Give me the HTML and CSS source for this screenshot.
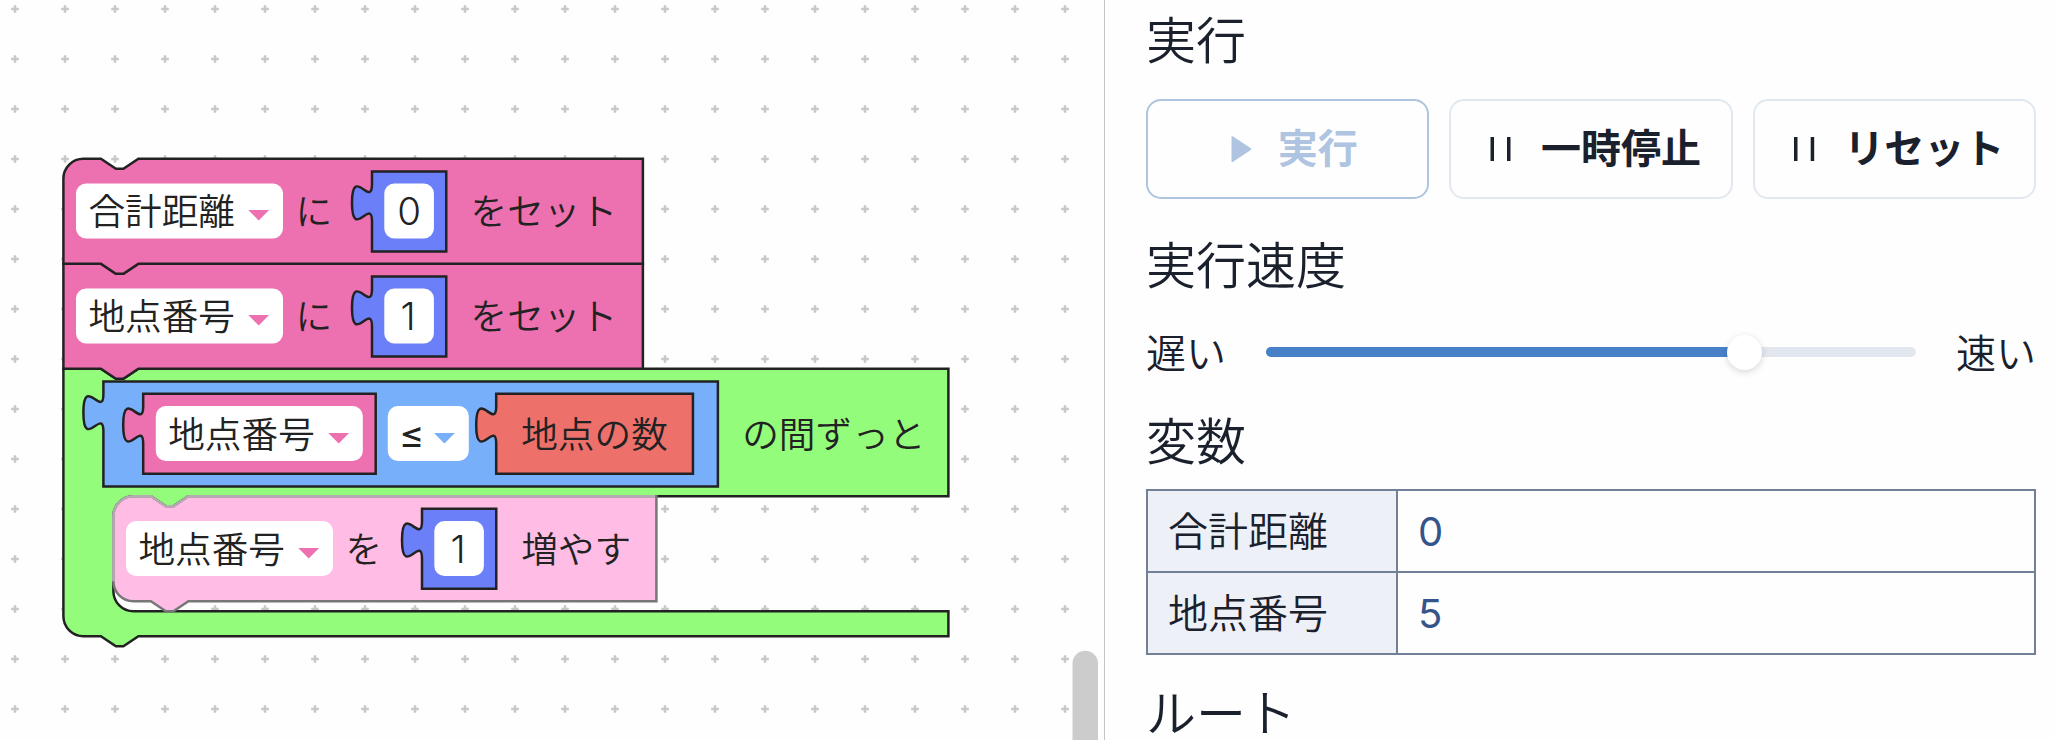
FILE: index.html
```html
<!DOCTYPE html>
<html lang="ja">
<head>
<meta charset="utf-8">
<title>実行</title>
<link rel="stylesheet" href="styles.css">
</head>
<body>
<main class="app">
  <section class="workspace">
    <svg class="canvas" width="1104" height="740" viewBox="0 0 1104 740">
      <defs>
        <pattern id="grid" x="-10" y="-16" width="50" height="50" patternUnits="userSpaceOnUse">
          <path class="grid-mark" d="M21.2 25h7.6M25 21.2v7.6"/>
        </pattern>
        <path id="arrow" d="M0 0h20.8L10.4 10.4z"/>
        <path id="number" d="M0 0h29.7v32H0V20c0-10-8 8-8-7.5s8 2.5 8-7.5z"/>
      </defs>
      <rect width="1104" height="740" fill="url(#grid)"/>

      <g class="outlined" transform="translate(63.4 158.75) scale(2.5)">
        <path class="green" d="M0 84h15l6 4h3l6-4h324v51H50l-6 4h-3l-6-4h-7a8 8 0 0 0-8 8v30a8 8 0 0 0 8 8h326v10H30l-6 4h-3l-6-4H8a8 8 0 0 1-8-8z"/>
        <path class="pink" d="M0 42h15l6 4h3l6-4h201.8v42H30l-6 4h-3l-6-4H0z"/>
        <path class="pink" d="M0 8a8 8 0 0 1 8-8h7l6 4h3l6-4h201.8v42H30l-6 4h-3l-6-4H0z"/>
      </g>

      <g class="outlined">
        <use href="#number" class="indigo" transform="translate(372 171.6) scale(2.5)"/>
        <use href="#number" class="indigo" transform="translate(372 276.6) scale(2.5)"/>
        <path class="blue" transform="translate(103.4 381.4) scale(2.5)" d="M0 0h245.8v42H0V20c0-10-8 8-8-7.5s8 2.5 8-7.5z"/>
        <path class="pink" transform="translate(143.2 393.8) scale(2.5)" d="M0 0h93v32H0V20c0-10-8 8-8-7.5s8 2.5 8-7.5z"/>
        <path class="red" transform="translate(496.2 393.8) scale(2.5)" d="M0 0h78.7v32H0V20c0-10-8 8-8-7.5s8 2.5 8-7.5z"/>
        <g transform="translate(113.4 496.25) scale(2.5)">
          <path class="running" d="M0 8a8 8 0 0 1 8-8h7l6 4h3l6-4h187.2v42H30l-6 4h-3l-6-4H8a8 8 0 0 1-8-8z"/>
          <path class="running-light" d="M0 34V8a8 8 0 0 1 8-8h7l6 4h3l6-4h186.7"/>
        </g>
        <use href="#number" class="indigo" transform="translate(422 508.8) scale(2.5)"/>
      </g>

      <g class="field">
        <rect x="76" y="183.5" width="207" height="55" rx="10"/>
        <rect x="384.3" y="183.5" width="49.6" height="55" rx="10"/>
        <rect x="76" y="288.5" width="207" height="55" rx="10"/>
        <rect x="384.3" y="288.5" width="49.6" height="55" rx="10"/>
        <rect x="155.8" y="406" width="207" height="55" rx="10"/>
        <rect x="387.8" y="406" width="81" height="55" rx="10"/>
        <rect x="126" y="521" width="207" height="55" rx="10"/>
        <rect x="434.3" y="521" width="49.6" height="55" rx="10"/>
      </g>
      <use href="#arrow" class="pink" x="248.3" y="210"/>
      <use href="#arrow" class="pink" x="248.3" y="315"/>
      <use href="#arrow" class="pink" x="328.3" y="433"/>
      <use href="#arrow" class="blue" x="434" y="433"/>
      <use href="#arrow" class="pink" x="298.3" y="548"/>

      <g class="label">
        <text x="88.4" y="225">合計距離</text>
        <text x="295.6" y="225">に</text>
        <text x="470.5" y="225">をセット</text>
        <text x="88.4" y="330">地点番号</text>
        <text x="295.6" y="330">に</text>
        <text x="470.5" y="330">をセット</text>
        <text x="168.2" y="447.5">地点番号</text>
        <text x="521.2" y="447.5">地点の数</text>
        <text x="742.2" y="447.5">の間ずっと</text>
        <text x="138.4" y="562.5">地点番号</text>
        <text x="345.6" y="562.5">を</text>
        <text x="521.2" y="562.5">増やす</text>
      </g>
      <g class="digit">
        <text x="409.2" y="225">0</text>
        <text x="408" y="330">1</text>
        <text x="458" y="562.5">1</text>
        <text class="operator" x="411.5" y="448">≤</text>
      </g>
      <rect class="scrollbar" x="1072.5" y="650.8" width="25.5" height="200" rx="12.75"/>
    </svg>
  </section>

  <aside class="panel">
    <h2 class="heading">実行</h2>
    <div class="buttons">
      <button class="button button-disabled" disabled>
        <svg class="icon" viewBox="0 0 40 40"><path d="M13.5 8.2a1 1 0 0 1 1.6-.8l17.7 11.9a1 1 0 0 1 0 1.6L15.1 32.8a1 1 0 0 1-1.6-.8z"/></svg>実行
      </button>
      <button class="button">
        <svg class="icon" viewBox="0 0 40 40"><path d="M9.5 8H13v24H9.5zM26 8h3.5v24H26z"/></svg>一時停止
      </button>
      <button class="button">
        <svg class="icon" viewBox="0 0 40 40"><path d="M10 8h3.5v24H10zM26.7 8h3.5v24h-3.5z"/></svg>リセット
      </button>
    </div>
    <h2 class="heading heading-speed">実行速度</h2>
    <div class="speed">
      <span class="speed-label">遅い</span>
      <div class="track"><div class="fill" style="width: 73.7%"><div class="thumb"></div></div></div>
      <span class="speed-label">速い</span>
    </div>
    <h2 class="heading heading-variables">変数</h2>
    <table class="variables">
      <tr><th>合計距離</th><td>0</td></tr>
      <tr><th>地点番号</th><td>5</td></tr>
    </table>
    <h2 class="heading heading-route">ルート</h2>
  </aside>
</main>
</body>
</html>
```

FILE: styles.css
```css
* { box-sizing: border-box; }

body {
  margin: 0;
  background: #fefefe;
  color: #1a202c;
  font-family: Inter, "Noto Sans CJK JP", sans-serif;
  font-weight: 350;
}

.app {
  display: flex;
  height: 740px;
  overflow: hidden;
}

.workspace {
  flex: 0 0 1104px;
  overflow: hidden;
}

.canvas { display: block; }
.grid-mark { stroke: #c8c8c8; stroke-width: 2.5; }
.outlined { stroke: #222; stroke-width: 1; }
.pink { fill: #ed70b0; }
.green { fill: #94fc7b; }
.blue { fill: #78affa; }
.indigo { fill: #6b7ff8; }
.red { fill: #ed706b; }
.running { fill: #ffbde5; stroke: #777; }
.running-light { fill: none; stroke: #b5adb2; }
.field { fill: #fff; }

.label,
.digit {
  fill: #222;
  font-size: 36.67px;
}

.label { font-family: "Noto Sans CJK JP", sans-serif; }
.digit { font-size: 38.5px; text-anchor: middle; }
.operator { font-size: 38px; font-weight: 400; }
.scrollbar { fill: #ccc; }

.panel {
  flex: 1;
  border-left: 1px solid #c4c4c4;
  padding: 11px 18px 0 41px;
}

.heading {
  margin: 0;
  padding-top: 1px;
  font-size: 50px;
  font-weight: 350;
  line-height: 59px;
}

.buttons {
  display: grid;
  grid-template-columns: repeat(3, 1fr);
  gap: 20px;
  margin-top: 28px;
}

.button {
  display: flex;
  align-items: center;
  justify-content: center;
  gap: 20px;
  height: 100px;
  padding: 0;
  border: 2px solid #e2e8f0;
  border-radius: 15px;
  background: transparent;
  color: #1a202c;
  font: 700 40px/60px Inter, "Noto Sans CJK JP", sans-serif;
  white-space: nowrap;
}

.button-disabled {
  border-color: #afc4e0;
  color: #afc4e0;
}

.icon {
  width: 40px;
  height: 40px;
  fill: currentColor;
}

.heading-speed { margin-top: 37px; }

.speed {
  display: flex;
  align-items: center;
  gap: 40px;
  margin-top: 26px;
  font-size: 40px;
  line-height: 57px;
}

.speed-label { padding-top: 3px; }

.track {
  flex: 1;
  height: 10px;
  border-radius: 5px;
  background: #e2e6ef;
}

.fill {
  display: flex;
  align-items: center;
  justify-content: flex-end;
  height: 10px;
  border-radius: 5px;
  background: #4880c8;
}

.thumb {
  flex: none;
  width: 35px;
  height: 35px;
  margin-right: -17px;
  border-radius: 50%;
  background: #fff;
  box-shadow: 0 2px 7px rgba(0, 0, 0, 0.16);
}

.heading-variables { margin-top: 30px; }

.variables {
  width: 890px;
  margin-top: 17px;
  border-collapse: collapse;
  table-layout: fixed;
  font-size: 40px;
  line-height: 58px;
}

.variables th,
.variables td {
  height: 82px;
  padding: 2px 20px 0;
  border: 2px solid #718096;
  font-weight: 350;
  text-align: left;
}

.variables th {
  width: 250px;
  background: #edf0f6;
}

.variables td {
  color: #35558a;
  font-weight: 400;
}

.heading-route {
  margin-top: 33px;
  line-height: 50px;
}
```
